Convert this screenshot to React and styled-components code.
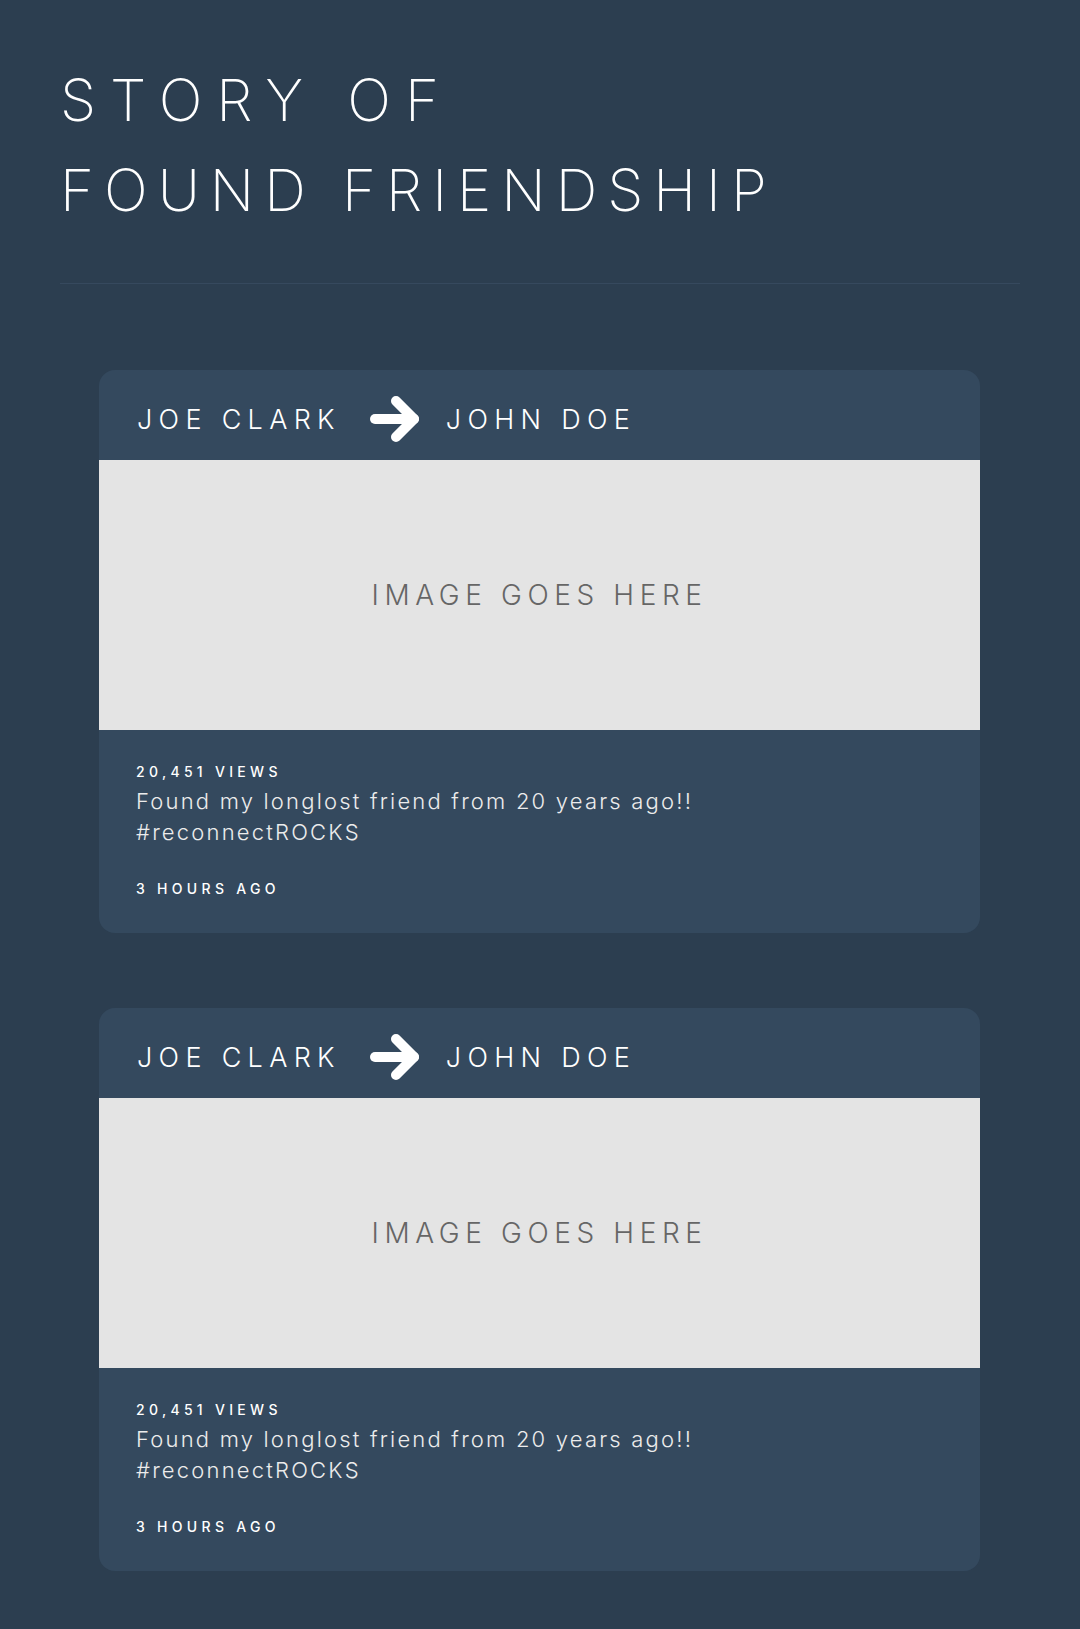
import styled, { createGlobalStyle } from "styled-components";

const GlobalStyle = createGlobalStyle`
  * { box-sizing: border-box; }
  body {
    margin: 0;
    background: #2c3e50;
    font-family: Inter, "Liberation Sans", sans-serif;
    color: #fff;
  }
`;

const Page = styled.main`
  padding: 55px 60px 59px;
`;

const Title = styled.h1`
  margin: 0;
  font-size: 58px;
  line-height: 90px;
  font-weight: 200;
  text-transform: uppercase;
`;

const TitleLine = styled.span`
  display: block;
  letter-spacing: ${(p) => p.$spacing}px;
`;

const Divider = styled.hr`
  margin: 48px 0 86px;
  border: 0;
  height: 1px;
  background: #36495e;
`;

const Feed = styled.section`
  display: flex;
  flex-direction: column;
  gap: 75px;
  padding: 0 40px 0 39px;
`;

const Card = styled.article`
  background: #34495e;
  border-radius: 16px;
  overflow: hidden;
`;

const CardHeader = styled.header`
  height: 90px;
  padding: 8px 38px 0;
  display: flex;
  align-items: center;
`;

const Name = styled.span`
  font-size: 27px;
  font-weight: 300;
  letter-spacing: 6.3px;
  text-transform: uppercase;
`;

const Arrow = styled.svg`
  width: 50px;
  height: 46px;
  margin: 0 26px 0 29px;
  flex-shrink: 0;
`;

const ImageBox = styled.div`
  height: 270px;
  background: #e4e4e4;
  display: flex;
  align-items: center;
  justify-content: center;
  color: #666;
  font-size: 28px;
  font-weight: 300;
  letter-spacing: 5.6px;
`;

const CardFooter = styled.div`
  padding: 32px 37px 34px;
`;

const Meta = styled.div`
  font-size: 14px;
  line-height: 20px;
  font-weight: 500;
  letter-spacing: 4.3px;
  text-transform: uppercase;
  margin-top: ${(p) => p.$gap || 0}px;
`;

const Caption = styled.p`
  margin: 3.5px 0 0;
  font-size: 22px;
  line-height: 31px;
  font-weight: 300;
  letter-spacing: 2.2px;
  color: #ececec;
`;

const posts = [
  { from: "Joe Clark", to: "John Doe", views: "20,451", text: "Found my longlost friend from 20 years ago!!", tag: "#reconnectROCKS", when: "3 hours ago" },
  { from: "Joe Clark", to: "John Doe", views: "20,451", text: "Found my longlost friend from 20 years ago!!", tag: "#reconnectROCKS", when: "3 hours ago" },
];

const ArrowIcon = () => (
  <Arrow viewBox="0 0 50 46" fill="none" stroke="#fff" strokeWidth="10" strokeLinecap="round" strokeLinejoin="round">
    <path d="M5 23H44" />
    <path d="M26 5L44 23L26 41" />
  </Arrow>
);

export default function App() {
  return (
    <>
      <GlobalStyle />
      <Page>
        <Title>
          <TitleLine $spacing={14}>Story of</TitleLine>
          <TitleLine $spacing={10}>Found Friendship</TitleLine>
        </Title>
        <Divider />
        <Feed>
          {posts.map((post, i) => (
            <Card key={i}>
              <CardHeader>
                <Name>{post.from}</Name>
                <ArrowIcon />
                <Name>{post.to}</Name>
              </CardHeader>
              <ImageBox>IMAGE GOES HERE</ImageBox>
              <CardFooter>
                <Meta>{post.views} views</Meta>
                <Caption>
                  {post.text}
                  <br />
                  {post.tag}
                </Caption>
                <Meta $gap={31.5}>{post.when}</Meta>
              </CardFooter>
            </Card>
          ))}
        </Feed>
      </Page>
    </>
  );
}
